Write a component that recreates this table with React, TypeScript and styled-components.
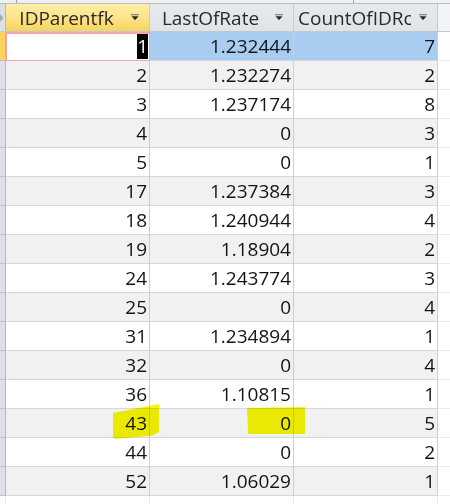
import React from "react";
import styled, { createGlobalStyle } from "styled-components";

const GlobalStyle = createGlobalStyle`
  html, body { margin: 0; padding: 0; background: #ffffff; }
  body { font-family: "Open Sans", "Noto Sans", Arial, sans-serif; }
`;

const COLS = "6px 144px 144px 144px 1fr";

const Sheet = styled.div`
  position: relative;
  width: 450px;
  height: 504px;
  overflow: hidden;
  background: #ffffff;
  display: flex;
  flex-direction: column;
`;

const TopStrip = styled.div`
  height: 3px;
  flex: none;
  background: #f1f1f1;
  border-bottom: 1px solid #b9bdc4;
  display: flex;
`;

const Tick = styled.span<{ $at: number }>`
  width: 1px;
  height: 3px;
  background: #9a9ea5;
  margin-left: ${(p) => p.$at}px;
`;

const HeaderRow = styled.div`
  display: grid;
  grid-template-columns: ${COLS};
  height: 28px;
  flex: none;
  box-sizing: border-box;
  border-bottom: 1px solid #c3c8d0;
`;

const Corner = styled.div`
  background: #dde1e6;
  border-right: 1px solid #b2b8c1;
  display: flex;
  align-items: center;
  justify-content: flex-start;
`;

const HeaderCell = styled.div<{ $active?: boolean }>`
  display: flex;
  align-items: center;
  box-sizing: border-box;
  padding: 0 10px 0 4px;
  border-right: 1px solid #c5cad2;
  background: ${(p) =>
    p.$active
      ? "linear-gradient(180deg, #feeeaa 0%, #fde58c 45%, #f9d35e 100%)"
      : "linear-gradient(180deg, #e6e9ee 0%, #e0e3e8 100%)"};
`;

const HeaderLabel = styled.span`
  flex: 1;
  min-width: 0;
  overflow: hidden;
  white-space: nowrap;
  text-align: center;
  font-size: 19px;
  line-height: 26px;
  color: #2a2a2a;
`;

const ArrowBox = styled.svg`
  flex: none;
  margin-left: 8px;
  width: 8px;
  height: 7px;
`;

const HeaderFill = styled.div`
  background: #f3f4fa;
`;

const DataRow = styled.div`
  display: grid;
  grid-template-columns: ${COLS};
  height: 29px;
  flex: none;
`;

const RowSelector = styled.div<{ $current?: boolean }>`
  box-sizing: border-box;
  background: ${(p) => (p.$current ? "#fbd35e" : "#dde1e6")};
  border-right: 1px solid #b2b8c1;
  border-bottom: 1px solid #bcc1c9;
`;

const Cell = styled.div<{ $alt?: boolean; $selected?: boolean; $active?: boolean }>`
  box-sizing: border-box;
  display: flex;
  align-items: center;
  justify-content: flex-end;
  padding-right: ${(p) => (p.$active ? "1px" : "2px")};
  font-size: 19px;
  color: #141414;
  white-space: nowrap;
  background: ${(p) => (p.$selected ? "#a8cdf0" : p.$alt ? "#f1f1f1" : "#ffffff")};
  border-right: 1px solid ${(p) => (p.$active ? "#f2a7ae" : "#c8cfda")};
  border-bottom: 1px solid ${(p) => (p.$active ? "#f2a7ae" : "#d3d8df")};
  box-shadow: ${(p) => (p.$active ? "inset 0 2px 0 #f2a7ae, inset 1px 0 0 #f2a7ae" : "none")};
`;

const Value = styled.span<{ $picked?: boolean }>`
  position: relative;
  line-height: 25px;
  background: ${(p) => (p.$picked ? "#000000" : "transparent")};
  color: ${(p) => (p.$picked ? "#ffffff" : "inherit")};
`;

const RowFill = styled.div`
  background: #ffffff;
  border-bottom: 1px solid #ececec;
`;

const FillerRow = styled.div`
  display: grid;
  grid-template-columns: ${COLS};
  flex: 1;
`;

const FillerCell = styled.div`
  background: #ffffff;
  border-right: 1px solid #e6e9ee;
`;

const Highlight = styled.div<{ $x: number; $y: number; $w: number; $h: number; $clip: string }>`
  position: absolute;
  left: ${(p) => p.$x}px;
  top: ${(p) => p.$y}px;
  width: ${(p) => p.$w}px;
  height: ${(p) => p.$h}px;
  background: #f7f704;
  mix-blend-mode: multiply;
  clip-path: polygon(${(p) => p.$clip});
  pointer-events: none;
`;

const FilterArrow = () => (
  <ArrowBox viewBox="0 0 8 7">
    <rect x="0" y="0" width="8" height="1.3" fill="#8a8a8a" />
    <polygon points="0.5,2.3 7.5,2.3 4,6.3" fill="#2a2a2a" />
  </ArrowBox>
);

const CornerMark = () => (
  <svg width="4" height="8" viewBox="0 0 4 8">
    <polygon points="0,0 3.5,4 0,8" fill="#a5abb3" />
  </svg>
);

type Row = [string, string, string];

const rows: Row[] = [
  ["1", "1.232444", "7"],
  ["2", "1.232274", "2"],
  ["3", "1.237174", "8"],
  ["4", "0", "3"],
  ["5", "0", "1"],
  ["17", "1.237384", "3"],
  ["18", "1.240944", "4"],
  ["19", "1.18904", "2"],
  ["24", "1.243774", "3"],
  ["25", "0", "4"],
  ["31", "1.234894", "1"],
  ["32", "0", "4"],
  ["36", "1.10815", "1"],
  ["43", "0", "5"],
  ["44", "0", "2"],
  ["52", "1.06029", "1"],
];

const headers = ["IDParentfk", "LastOfRate", "CountOfIDRc"];

export default function App() {
  return (
    <>
      <GlobalStyle />
      <Sheet>
        <TopStrip>
          <Tick $at={16} />
          <Tick $at={336} />
        </TopStrip>
        <HeaderRow>
          <Corner>
            <CornerMark />
          </Corner>
          {headers.map((h, i) => (
            <HeaderCell key={h} $active={i === 0}>
              <HeaderLabel>{h}</HeaderLabel>
              <FilterArrow />
            </HeaderCell>
          ))}
          <HeaderFill />
        </HeaderRow>
        {rows.map((r, i) => {
          const current = i === 0;
          const alt = i % 2 === 1;
          return (
            <DataRow key={r[0]}>
              <RowSelector $current={current} />
              <Cell $alt={alt} $active={current}>
                <Value $picked={current}>{r[0]}</Value>
              </Cell>
              <Cell $alt={alt} $selected={current}>
                <Value>{r[1]}</Value>
              </Cell>
              <Cell $alt={alt} $selected={current}>
                <Value>{r[2]}</Value>
              </Cell>
              <RowFill />
            </DataRow>
          );
        })}
        <FillerRow>
          <FillerCell />
          <FillerCell />
          <FillerCell />
          <FillerCell />
          <div />
        </FillerRow>
        <Highlight
          $x={113}
          $y={404}
          $w={46}
          $h={35}
          $clip="0% 26%, 100% 0%, 100% 80%, 85% 90%, 4% 100%, 0% 96%"
        />
        <Highlight
          $x={247}
          $y={407}
          $w={58}
          $h={27}
          $clip="0% 4%, 100% 0%, 100% 100%, 2% 100%"
        />
      </Sheet>
    </>
  );
}
